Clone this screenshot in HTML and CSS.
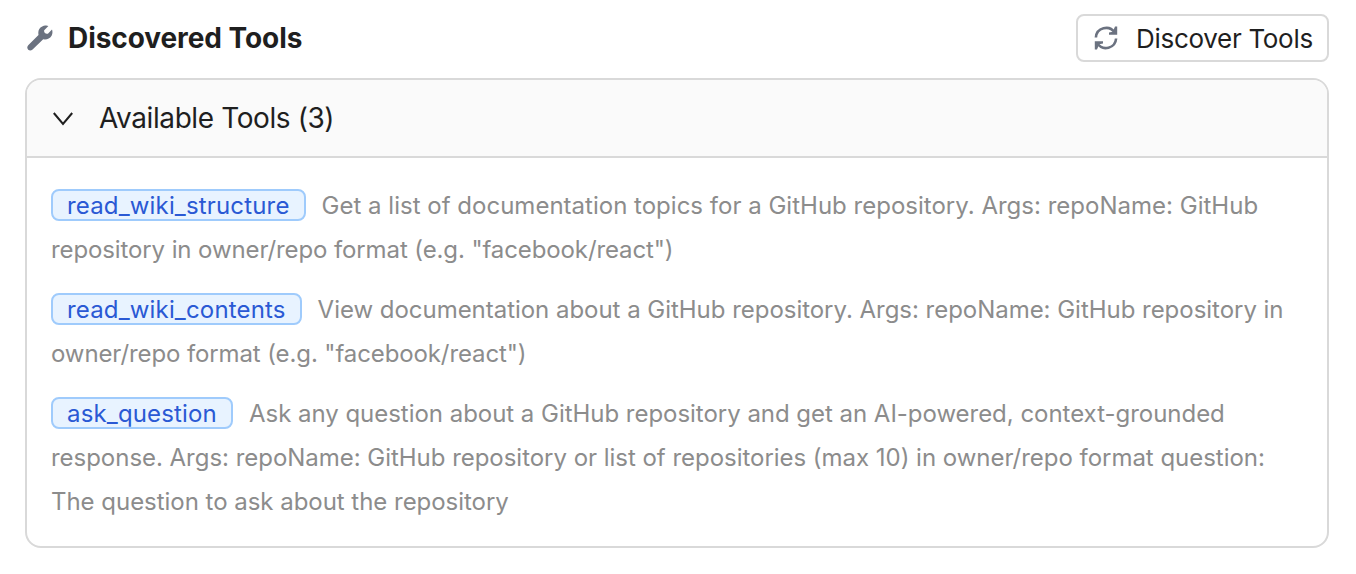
FILE: index.html
```html
<!DOCTYPE html>
<html lang="en">
<head>
<meta charset="UTF-8" />
<meta name="viewport" content="width=device-width, initial-scale=1" />
<title>Discovered Tools</title>
<link rel="stylesheet" href="styles.css">
</head>
<body>
  <div class="tools-header">
    <h2 class="tools-title">
      <svg class="icon-wrench" viewBox="0 0 26 26" aria-hidden="true">
        <path d="M18.2 0.6 Q20.4 0.4 21.4 1 L17.2 5.2 Q16.8 7 17.9 8.1 Q19.2 9.2 20.9 8.7 L25 4.6 Q26.1 7.6 24.6 10.7 Q21.6 15.2 16.2 14.3 L5.6 24.6 Q3.2 26.4 1.2 24.7 Q-0.7 22.5 1.2 20.2 L11.5 10 Q10.4 3.8 15.2 1.5 Q16.8 0.7 18.2 0.6 Z" />
      </svg>
      <span>Discovered Tools</span>
    </h2>
    <button class="discover-btn" type="button">
      <svg class="icon-sync" viewBox="0 0 24 24" aria-hidden="true">
        <path class="arc" d="M1.9 11.5 A10.2 10.2 0 0 1 20.6 6.6 M22.1 12.5 A10.2 10.2 0 0 1 3.4 17.4" />
        <path class="arrow" d="M23.2 0.6 V8.8 H15 V6.4 L18.8 5.8 L21 0.6 Z M0.8 23.4 V15.2 H9 V17.6 L5.2 18.2 L3 23.4 Z" />
      </svg>
      <span>Discover Tools</span>
    </button>
  </div>

  <div class="collapse">
    <div class="collapse-header">
      <svg class="icon-chevron" viewBox="0 0 22 14" aria-hidden="true">
        <path d="M1.8 1 L11 12 L20.2 1" />
      </svg>
      <span>Available Tools (3)</span>
    </div>
    <div class="collapse-content">
      <p class="tool"><span class="tag">read_wiki_structure</span><span class="desc wide">Get a list of documentation topics for a GitHub repository. Args: repoName: GitHub<br><span class="example">repository in owner/repo format (e.g. "facebook/react")</span></span></p>
      <p class="tool"><span class="tag">read_wiki_contents</span><span class="desc">View documentation about a GitHub repository. Args: repoName: GitHub repository in<br><span class="example">owner/repo format (e.g. "facebook/react")</span></span></p>
      <p class="tool"><span class="tag">ask_question</span><span class="desc">Ask any question about a GitHub repository and get an AI-powered, context-grounded<br>response. Args: repoName: GitHub repository or list of repositories (max 10) in owner/repo format question:<br>The question to ask about the repository</span></p>
    </div>
  </div>
</body>
</html>
```

FILE: styles.css
```css
* {
  box-sizing: border-box;
}
body {
  margin: 0;
  padding: 14px 27px 26px 25px;
  background: #fff;
  font-family: Inter, "Liberation Sans", sans-serif;
  color: #1f1f1f;
}
/* Header */
.tools-header {
  display: flex;
  justify-content: space-between;
  align-items: center;
  height: 48px;
  margin-bottom: 16px;
}
.tools-title {
  display: flex;
  align-items: center;
  gap: 15px;
  margin: 0;
  padding-left: 2px;
  font-size: 28px;
  font-weight: 700;
  letter-spacing: -0.07px;
}
.icon-wrench {
  width: 26px;
  height: 26px;
  fill: #6b7280;
}
.discover-btn {
  display: flex;
  align-items: center;
  gap: 18px;
  width: 253px;
  height: 48px;
  padding: 0 0 0 16px;
  border: 2px solid #d9d9d9;
  border-radius: 8px;
  background: #fff;
  color: #1f1f1f;
  font-family: inherit;
  font-size: 26px;
  letter-spacing: -0.3px;
  white-space: nowrap;
  cursor: pointer;
}
.icon-sync {
  width: 24px;
  height: 24px;
}
.icon-sync .arc {
  fill: none;
  stroke: #6b7280;
  stroke-width: 2.6;
}
.icon-sync .arrow {
  fill: #6b7280;
}
/* Collapse */
.collapse {
  border: 2px solid #d9d9d9;
  border-radius: 16px;
  overflow: hidden;
}
.collapse-header {
  display: flex;
  align-items: center;
  gap: 25px;
  height: 78px;
  padding: 0 0 0 25px;
  border-bottom: 2px solid #d9d9d9;
  background: #fafafa;
  font-size: 28px;
  letter-spacing: -0.4px;
}
.icon-chevron {
  width: 22px;
  height: 14px;
  margin-top: 1px;
  fill: none;
  stroke: #1f1f1f;
  stroke-width: 2;
}
.collapse-content {
  padding: 26px 0 22px 24px;
}
.tool {
  margin: 0 0 16px;
  font-size: 24px;
  line-height: 44px;
  white-space: nowrap;
}
.tool:last-child {
  margin-bottom: 0;
}
.tag {
  display: inline-block;
  height: 32px;
  margin: -1px 16px 0 0;
  padding: 1px 14px 0;
  border: 2px solid #9fcbfc;
  border-radius: 8px;
  background: #e8f3ff;
  color: #2a59d4;
  line-height: 28px;
  letter-spacing: 0.16px;
}
.desc {
  color: #8c8c8c;
  letter-spacing: -0.03px;
}
.desc.wide {
  letter-spacing: 0.01px;
}
.example {
  letter-spacing: -0.11px;
}
```
